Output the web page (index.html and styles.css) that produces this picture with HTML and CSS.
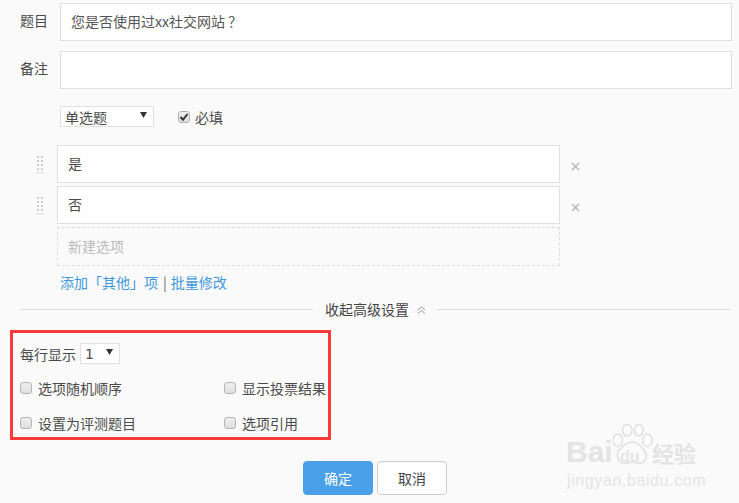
FILE: index.html
```html
<!DOCTYPE html>
<html lang="zh">
<head>
<meta charset="utf-8">
<title>题目设置</title>
<link rel="stylesheet" href="styles.css">
</head>
<body>
<main class="page">
  <div class="field-row first">
    <span class="field-label">题目</span>
    <div class="text-box">您是否使用过xx社交网站<span class="centered-mark">？</span></div>
  </div>
  <div class="field-row second">
    <span class="field-label">备注</span>
    <div class="text-box"></div>
  </div>
  <div class="type-row">
    <div class="select type-select"><span>单选题</span><svg class="arrow" viewBox="0 0 7 6"><path d="M0 0H7L3.5 6Z"/></svg></div>
    <label class="required">
      <span class="check checked"><svg viewBox="0 0 10 10"><path d="M1.500 5 4 7.800 8.500 2" fill="none" stroke="#333" stroke-width="2"/></svg></span>
      <span>必填</span>
    </label>
  </div>
  <div class="options">
    <div class="option-row">
      <span class="grip"></span>
      <div class="option-box">是</div>
      <svg class="remove" viewBox="0 0 9 9"><path d="M1 1 8 8M8 1 1 8" stroke="#b4b4b4" stroke-width="1.400" fill="none"/></svg>
    </div>
    <div class="option-row">
      <span class="grip"></span>
      <div class="option-box">否</div>
      <svg class="remove" viewBox="0 0 9 9"><path d="M1 1 8 8M8 1 1 8" stroke="#b4b4b4" stroke-width="1.400" fill="none"/></svg>
    </div>
    <div class="new-option">新建选项</div>
  </div>
  <div class="links"><a>添加「其他」项</a><span class="sep">|</span><a>批量修改</a></div>
  <div class="divider">
    <span class="line"></span>
    <span class="divider-text">收起高级设置</span>
    <svg class="chevrons" viewBox="0 0 9 8"><path d="M1 4 4.500 1 8 4M1 7.500 4.500 4.500 8 7.500" fill="none" stroke="#999" stroke-width="1"/></svg>
    <span class="line"></span>
  </div>
  <section class="advanced">
    <div class="per-line">
      <span>每行显示</span>
      <div class="select count-select"><span>1</span><svg class="arrow" viewBox="0 0 7 6"><path d="M0 0H7L3.500 6Z"/></svg></div>
    </div>
    <div class="adv-grid">
      <label class="adv-item"><span class="check"></span><span>选项随机顺序</span></label>
      <label class="adv-item"><span class="check"></span><span>显示投票结果</span></label>
      <label class="adv-item"><span class="check"></span><span>设置为评测题目</span></label>
      <label class="adv-item"><span class="check"></span><span>选项引用</span></label>
    </div>
  </section>
  <div class="actions">
    <button class="btn primary">确定</button>
    <button class="btn">取消</button>
  </div>
</main>
<div class="watermark">
  <svg class="paw" viewBox="0 0 44 44" fill="#fbfbfb" stroke="#dedede" stroke-width="1.500">
    <ellipse cx="5" cy="17" rx="5" ry="6.500"/>
    <ellipse cx="15" cy="6.500" rx="5" ry="6"/>
    <ellipse cx="27" cy="6.500" rx="4.500" ry="6"/>
    <ellipse cx="36" cy="17" rx="5" ry="6.500"/>
    <path d="M20 19c6 0 9 4 13 9 4 5 1 14-6 13-3 0-5-1-7-1s-4 1-8 1c-7 0-9-8-6-13 4-5 8-9 14-9Z"/>
  </svg>
  <div class="wm-top"><span class="wm-bai">Bai</span><span class="wm-du">du</span><span class="wm-jy">经验</span></div>
  <div class="wm-url">jingyan.baidu.com</div>
</div>
</body>
</html>
```
FILE: styles.css
```css
* { box-sizing: border-box; }
html, body { margin: 0; padding: 0; }
body {
  width: 739px;
  height: 503px;
  overflow: hidden;
  position: relative;
  background: #fafafa;
  color: #4a4a4a;
  font: 14px/18px "Noto Sans CJK SC", "Liberation Sans", sans-serif;
}
.page { padding-top: 3px; }
.field-row { display: flex; height: 38px; padding-right: 7px; }
.second { margin-top: 10px; }
.field-label { width: 60px; padding: 8px 0 0 20px; }
.text-box {
  flex: 1;
  background: #fff;
  border: 1px solid #e0e0e0;
  padding: 8px 10px;
  color: #555;
}
.centered-mark { font-family: "Noto Sans CJK TC", sans-serif; margin-left: 3px; }
.type-row { display: flex; align-items: center; margin: 17px 0 0 60px; height: 21px; }
.select {
  display: flex;
  align-items: center;
  justify-content: space-between;
  height: 21px;
  background: #fff;
  border: 1px solid #e0e0e0;
  padding: 0 6px 0 4px;
}
.type-select { width: 94px; }
.arrow { width: 7px; height: 6px; margin-top: -3px; fill: #333; }
.required { display: flex; align-items: center; gap: 5px; margin-left: 24px; }
.check {
  display: block;
  width: 12px;
  height: 12px;
  flex: none;
  border: 1px solid #b4b4b4;
  border-radius: 3px;
  background: linear-gradient(#efefef, #dfdfdf);
}
.check svg { display: block; width: 10px; height: 10px; }
.options { margin: 18px 0 0 37px; width: 540px; }
.option-row { display: flex; align-items: center; height: 38px; margin-bottom: 3px; }
.grip {
  width: 8px;
  height: 17px;
  margin-right: 12px;
  flex: none;
  background-image: radial-gradient(circle at 1px 1px, #ccc 1.2px, transparent 1.3px);
  background-size: 4px 4px;
}
.option-box {
  width: 503px;
  height: 38px;
  flex: none;
  background: #fff;
  border: 1px solid #e0e0e0;
  padding: 8px 10px;
  color: #4a4a4a;
}
.remove { width: 9px; height: 9px; flex: none; margin: 5px 0 0 11px; }
.new-option {
  margin-left: 20px;
  width: 503px;
  height: 39px;
  border: 1px dashed #ddd;
  padding: 9px 10px;
  color: #bbb;
}
.links { margin: 7px 0 0 60px; height: 18px; color: #666; white-space: nowrap; }
.links a { color: #3f97e0; }
.sep { margin: 0 4px 0 5px; }
.divider { display: flex; align-items: center; margin: 9px 9px 0 20px; height: 18px; }
.line { flex: 1; height: 1px; background: #ddd; }
.divider-text { margin-left: 12px; color: #444; }
.chevrons { width: 9px; height: 8px; margin: 2px 11px 0 8px; }
.advanced {
  width: 321px;
  height: 110px;
  margin: 12px 0 0 10px;
  border: 3px solid #f83a3a;
  padding: 10px 0 0 7px;
  white-space: nowrap;
}
.per-line { display: flex; align-items: center; gap: 4px; height: 21px; }
.count-select { width: 40px; padding-left: 4px; font: 14px "DejaVu Sans", sans-serif; }
.adv-grid {
  display: grid;
  grid-template-columns: 204px 100px;
  grid-auto-rows: 35px;
  margin-top: 9px;
}
.adv-item { display: flex; align-items: center; gap: 6px; height: 18px; margin-top: 6px; }
.actions { display: flex; gap: 4px; margin: 21px 0 0 303px; }
.btn {
  width: 70px;
  height: 34px;
  padding: 0;
  background: #fff;
  border: 1px solid #ccc;
  border-radius: 4px;
  color: #444;
  font: inherit;
}
.primary { background: #4aa0e8; border-color: #4aa0e8; color: #fff; }
.watermark {
  position: absolute;
  left: 566px;
  top: 423px;
  width: 135px;
  height: 74px;
  color: #e4e4e4;
  font-family: "Liberation Sans", "Noto Sans CJK SC", sans-serif;
}
.paw { position: absolute; left: 47px; top: 0; width: 42px; height: 44px; }
.wm-top { position: absolute; left: 0; top: 14px; display: flex; align-items: baseline; white-space: nowrap; font-weight: 700; line-height: 30px; }
.wm-bai { font-size: 30px; width: 54px; }
.wm-du { font-size: 16px; width: 32px; }
.wm-jy { font-size: 22px; letter-spacing: 0; font-family: "Noto Sans CJK SC", sans-serif; }
.wm-url { position: absolute; left: 1px; top: 49px; font-size: 16px; line-height: 18px; white-space: nowrap; letter-spacing: 0.6px; }
```
